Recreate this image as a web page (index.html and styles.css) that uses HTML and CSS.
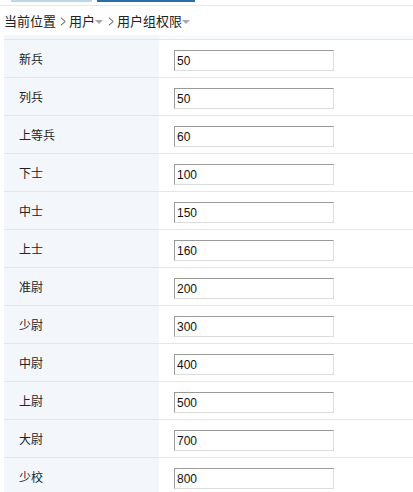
FILE: index.html
```html
<!DOCTYPE html>
<html>
<head>
<meta charset="utf-8">
<link rel="stylesheet" href="styles.css">
</head>
<body>
<div class="topbar">
  <span class="tab tab-light"></span>
  <span class="tab tab-dark"></span>
</div>
<div class="crumb">
  <span>当前位置</span><svg class="sep" width="6" height="9" viewBox="0 0 6 9"><path d="M0.8 0.6 L5.2 4.5 L0.8 8.4" fill="none" stroke="#444" stroke-width="1"/></svg><span>用户</span><span class="caret"></span><svg class="sep" width="6" height="9" viewBox="0 0 6 9"><path d="M0.8 0.6 L5.2 4.5 L0.8 8.4" fill="none" stroke="#444" stroke-width="1"/></svg><span>用户组权限</span><span class="caret"></span>
</div>
<div class="strip"><div class="strip-left"></div></div>
<div class="grid">
  <div class="row"><div class="lbl">新兵</div><div class="val"><input class="inp" value="50"></div></div>
  <div class="row"><div class="lbl">列兵</div><div class="val"><input class="inp" value="50"></div></div>
  <div class="row"><div class="lbl">上等兵</div><div class="val"><input class="inp" value="60"></div></div>
  <div class="row"><div class="lbl">下士</div><div class="val"><input class="inp" value="100"></div></div>
  <div class="row"><div class="lbl">中士</div><div class="val"><input class="inp" value="150"></div></div>
  <div class="row"><div class="lbl">上士</div><div class="val"><input class="inp" value="160"></div></div>
  <div class="row"><div class="lbl">准尉</div><div class="val"><input class="inp" value="200"></div></div>
  <div class="row"><div class="lbl">少尉</div><div class="val"><input class="inp" value="300"></div></div>
  <div class="row"><div class="lbl">中尉</div><div class="val"><input class="inp" value="400"></div></div>
  <div class="row"><div class="lbl">上尉</div><div class="val"><input class="inp" value="500"></div></div>
  <div class="row"><div class="lbl">大尉</div><div class="val"><input class="inp" value="700"></div></div>
  <div class="row"><div class="lbl">少校</div><div class="val"><input class="inp" value="800"></div></div>
</div>
</body>
</html>
```
FILE: styles.css
```css
html, body {
  margin: 0;
  padding: 0;
  background: #fff;
  font-family: "Liberation Sans", "Noto Sans CJK SC", sans-serif;
  color: #333;
  overflow: hidden;
}
.topbar {
  height: 5px;
  border-bottom: 1px solid #e1e8f0;
  display: flex;
  align-items: flex-start;
}
.tab {
  display: block;
  height: 2px;
}
.tab-light {
  margin-left: 11px;
  width: 81px;
  background: #b9d8ea;
}
.tab-dark {
  margin-left: 5px;
  width: 98px;
  background: #2b6ea8;
}
.crumb {
  height: 29px;
  display: flex;
  align-items: center;
  padding-left: 4px;
  font-size: 13px;
  color: #222;
  font-family: "Noto Sans CJK SC", sans-serif;
}
.sep {
  display: block;
  flex: none;
  margin: 1px 3px 0 4px;
}
.caret {
  width: 0;
  height: 0;
  border-left: 4px solid transparent;
  border-right: 4px solid transparent;
  border-top: 4px solid #a9a9a9;
  margin-left: 0;
  margin-right: 1px;
  margin-top: 2px;
}
.strip {
  margin-left: 4px;
  height: 4px;
  background: #f8fbfe;
  border-bottom: 1px solid #dde7f1;
}
.strip-left {
  width: 155px;
  height: 4px;
  background: #f2f7fc;
}
.grid {
  margin-left: 4px;
}
.row {
  display: flex;
  height: 37px;
  border-bottom: 1px solid #dde7f1;
}
.lbl {
  width: 140px;
  padding-left: 15px;
  background: #f3f7fc;
  font-size: 12px;
  color: #222;
  display: flex;
  align-items: center;
  font-family: "Noto Sans CJK SC", sans-serif;
}
.val {
  flex: 1;
  padding-left: 15px;
  padding-top: 10px;
}
.inp {
  box-sizing: border-box;
  width: 160px;
  height: 21px;
  margin: 0;
  padding: 0 0 0 2px;
  border: 1px solid;
  border-color: #9a9a9a #dcdcdc #dcdcdc #9a9a9a;
  font-family: "Liberation Sans", sans-serif;
  font-size: 12px;
  color: #111;
  background: #fff;
  outline: none;
}
```
